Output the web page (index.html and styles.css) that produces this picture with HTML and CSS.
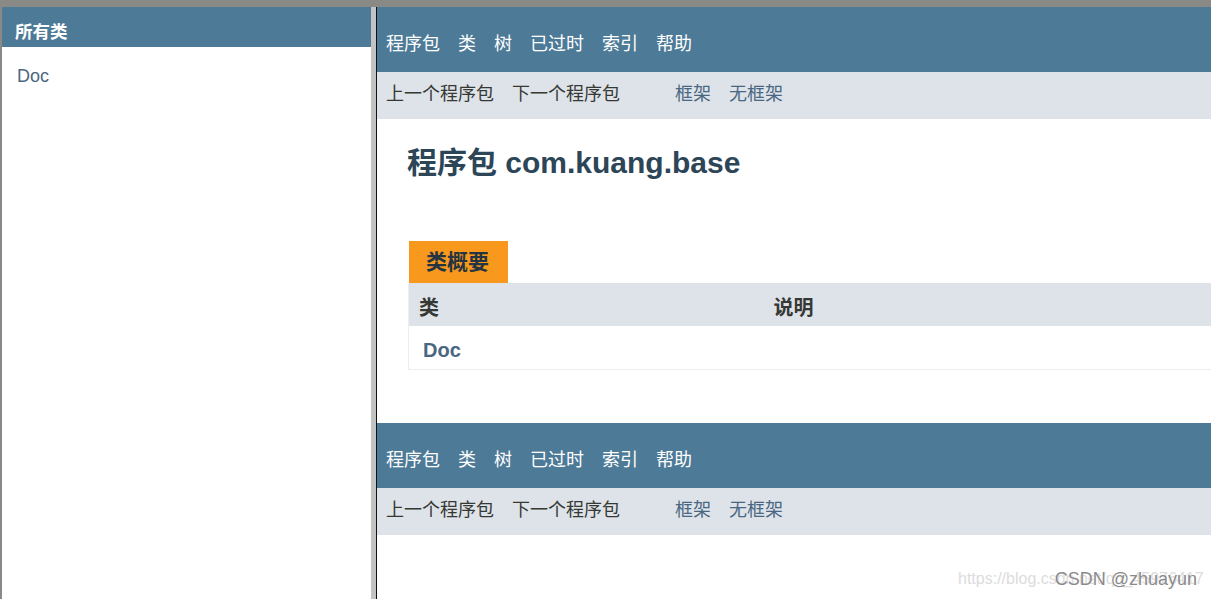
FILE: index.html
```html
<!DOCTYPE html>
<html lang="zh-CN">
<head>
  <meta charset="UTF-8">
  <title>com.kuang.base</title>
  <link rel="stylesheet" href="styles.css">
</head>
<body>
  <div class="frames">
    <div class="left-frame">
      <h1 class="bar">所有类</h1>
      <ul class="class-list">
        <li><a href="#">Doc</a></li>
      </ul>
    </div>
    <div class="frame-divider"></div>
    <div class="right-frame">
      <div class="top-nav">
        <ul class="nav-list">
          <li>程序包</li>
          <li>类</li>
          <li>树</li>
          <li>已过时</li>
          <li>索引</li>
          <li>帮助</li>
        </ul>
      </div>
      <div class="sub-nav">
        <ul class="nav-list">
          <li>上一个程序包</li>
          <li>下一个程序包</li>
        </ul>
        <ul class="nav-list frame-links">
          <li><a href="#">框架</a></li>
          <li><a href="#">无框架</a></li>
        </ul>
      </div>

      <h1 class="title">程序包 com.kuang.base</h1>

      <div class="content-container">
        <div class="caption">类概要</div>
        <table class="type-summary">
          <tr>
            <th class="col-first">类</th>
            <th>说明</th>
          </tr>
          <tr>
            <td class="col-first"><a href="#">Doc</a></td>
            <td></td>
          </tr>
        </table>
      </div>

      <div class="top-nav">
        <ul class="nav-list">
          <li>程序包</li>
          <li>类</li>
          <li>树</li>
          <li>已过时</li>
          <li>索引</li>
          <li>帮助</li>
        </ul>
      </div>
      <div class="sub-nav">
        <ul class="nav-list">
          <li>上一个程序包</li>
          <li>下一个程序包</li>
        </ul>
        <ul class="nav-list frame-links">
          <li><a href="#">框架</a></li>
          <li><a href="#">无框架</a></li>
        </ul>
      </div>
    </div>
  </div>

  <div class="watermark-url">https://blog.csdn.net/qq_45976417</div>
  <div class="watermark-name">CSDN @zhuayun</div>
</body>
</html>
```

FILE: styles.css
```css
* {
  box-sizing: border-box;
}

html, body {
  margin: 0;
  height: 100%;
  overflow: hidden;
}

body {
  background-color: #898985;
  font-family: "Liberation Sans", "Noto Sans CJK SC", sans-serif;
  color: #353833;
}

a {
  text-decoration: none;
}

.frames {
  display: flex;
  height: 100vh;
  padding: 7px 0 0 2px;
}

.left-frame {
  width: 369px;
  flex-shrink: 0;
  background-color: #fff;
}

.bar {
  margin: 0;
  height: 40px;
  padding: 13px 0 0 13px;
  background-color: #4d7a97;
  color: #fff;
  font-size: 17.5px;
  line-height: 24px;
  font-weight: bold;
}

.class-list {
  list-style: none;
  margin: 0;
  padding: 18px 0 0 15px;
  font-size: 18px;
  line-height: 22px;
}

.class-list a {
  color: #4a6782;
}

.frame-divider {
  width: 6px;
  flex-shrink: 0;
  background-color: #c3c3c3;
  border-right: 1px solid #111;
}

.right-frame {
  flex: 1;
  min-width: 0;
  overflow: hidden;
  background-color: #fff;
}

.top-nav {
  height: 65px;
  padding: 25px 0 0 9px;
  background-color: #4d7a97;
  color: #fff;
  font-size: 18px;
  line-height: 24px;
}

.nav-list {
  display: flex;
  gap: 18px;
  list-style: none;
  margin: 0;
  padding: 0;
}

.sub-nav {
  display: flex;
  height: 47px;
  padding: 10px 0 0 9px;
  background-color: #dee3e9;
  font-size: 18px;
  line-height: 24px;
}

.frame-links {
  margin-left: 55px;
}

.frame-links a {
  color: #4a6782;
}

.title {
  margin: 0;
  padding: 26px 0 0 30px;
  font-size: 30px;
  line-height: 36px;
  color: #2c4557;
}

.content-container {
  padding: 60px 0 53px 31px;
}

.caption {
  display: inline-block;
  height: 42px;
  margin-left: 1px;
  padding: 0 19px 0 17px;
  background-color: #f8981d;
  color: #253441;
  font-size: 21px;
  line-height: 42px;
  font-weight: bold;
  vertical-align: top;
}

.type-summary {
  width: calc(100% + 20px);
  border-collapse: collapse;
  border-left: 1px solid #eee;
  border-bottom: 1px solid #eee;
}

.type-summary th {
  height: 43px;
  padding: 6px 0 0 10px;
  background-color: #dee3e9;
  text-align: left;
  font-size: 20px;
  line-height: 24px;
  font-weight: bold;
  color: #353833;
}

.type-summary th.col-first {
  width: 355px;
}

.type-summary td {
  height: 43px;
  padding: 5px 0 0 14px;
  font-size: 20px;
  line-height: 24px;
}

.type-summary td a {
  color: #4a6782;
  font-weight: bold;
}

.watermark-url {
  position: absolute;
  left: 958px;
  top: 570px;
  font-size: 16px;
  color: #dcdcdc;
  white-space: nowrap;
}

.watermark-name {
  position: absolute;
  right: 14px;
  top: 569px;
  font-size: 18px;
  color: #8a8a8a;
  white-space: nowrap;
  text-shadow: 0 0 1px #fff;
}
```
